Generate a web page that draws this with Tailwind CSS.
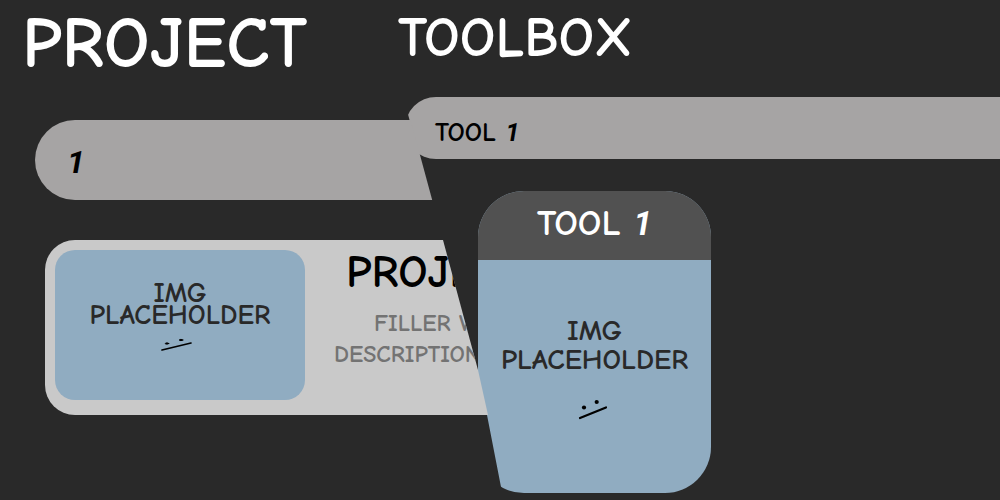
<!DOCTYPE html>
<html lang="en">
<head>
<meta charset="utf-8">
<title>Project Toolbox</title>
<script src="https://cdn.jsdelivr.net/npm/@tailwindcss/browser@4"></script>
</head>
<body class="grid min-h-screen overflow-hidden bg-[#292929] font-['Comic_Neue','Comic_Sans_MS',Lato,sans-serif] font-bold leading-none text-black">
  <!-- Both panels share one grid cell and meet along a slanted edge -->
  <section class="z-10 col-start-1 row-start-1 min-w-0 overflow-hidden [clip-path:polygon(0_0,378px_0,410px_118px,443px_240px,478px_370px,488px_415px,501px_487px,503px_500px,0_500px)]">
    <h1 class="h-[120px] pt-2 pl-[22px] text-[72px] text-white">PROJECT</h1>
    <div class="ml-[35px] flex h-20 items-center rounded-l-full bg-[#a6a4a4] pt-1 pl-8 font-[Roboto] text-[32px] italic">1</div>
    <article class="mt-10 ml-[45px] flex h-[175px] rounded-l-[30px] bg-[#c9c9c9] p-[10px]">
      <div class="flex h-[150px] w-[250px] shrink-0 flex-col items-center rounded-[20px] bg-[#90acc1] pt-8 text-center text-[28px] leading-[22px] text-[#292929]">
        <p>IMG<br>PLACEHOLDER</p>
        <svg class="mt-3 mr-2 text-black" width="32" height="14" viewBox="0 0 32 14" fill="none" stroke="currentColor" stroke-width="1.7" stroke-linecap="round" aria-hidden="true"><path d="M2 12 31 5"/><ellipse cx="7" cy="5.5" rx="1.8" ry=".6" fill="currentColor" stroke-width="1"/><ellipse cx="21" cy="2" rx="1.8" ry=".6" fill="currentColor" stroke-width="1"/></svg>
      </div>
      <div class="pl-[29px] whitespace-nowrap">
        <h2 class="pl-3 text-[46px]">PROJECT 1</h2>
        <p class="mt-3 text-[24px] leading-[31px] text-[#737373]"><span class="pl-10">FILLER WORDS</span><br>DESCRIPTION</p>
      </div>
    </article>
  </section>

  <section class="col-start-1 row-start-1 min-w-0 [clip-path:polygon(377px_0,409px_118px,442px_240px,477px_370px,487px_415px,501px_487px,503px_500px,100%_500px,100%_0)]">
    <h1 class="h-[97px] pt-[10px] pl-[398px] text-[56px] text-white">TOOLBOX</h1>
    <div class="ml-[405px] flex h-[62px] items-center rounded-l-full bg-[#a6a4a4] pt-2 pl-[30px] text-[27px]">TOOL&nbsp;<span class="font-[Roboto] text-[25px] italic">1</span></div>
    <article class="mt-8 ml-[478px] w-[233px] overflow-hidden rounded-[46px] bg-[#90acc1] text-center text-[#292929]">
      <h2 class="flex h-[69px] items-center justify-center bg-[#515151] pb-1 text-[37px] text-white">TOOL&nbsp;<span class="font-[Roboto] text-[33px] italic">1</span></h2>
      <div class="flex h-[233px] flex-col items-center pt-14 text-[29px] leading-[29px]">
        <p>IMG<br>PLACEHOLDER</p>
        <svg class="mt-6 mr-1 text-black" width="32" height="22" viewBox="0 0 32 22" fill="none" stroke="currentColor" stroke-width="2.2" stroke-linecap="round" aria-hidden="true"><path d="M3 20 29 9.500"/><circle cx="7" cy="9.500" r="2.1" fill="currentColor" stroke="none"/><circle cx="19.700" cy="4" r="2.1" fill="currentColor" stroke="none"/></svg>
      </div>
    </article>
  </section>
</body>
</html>
